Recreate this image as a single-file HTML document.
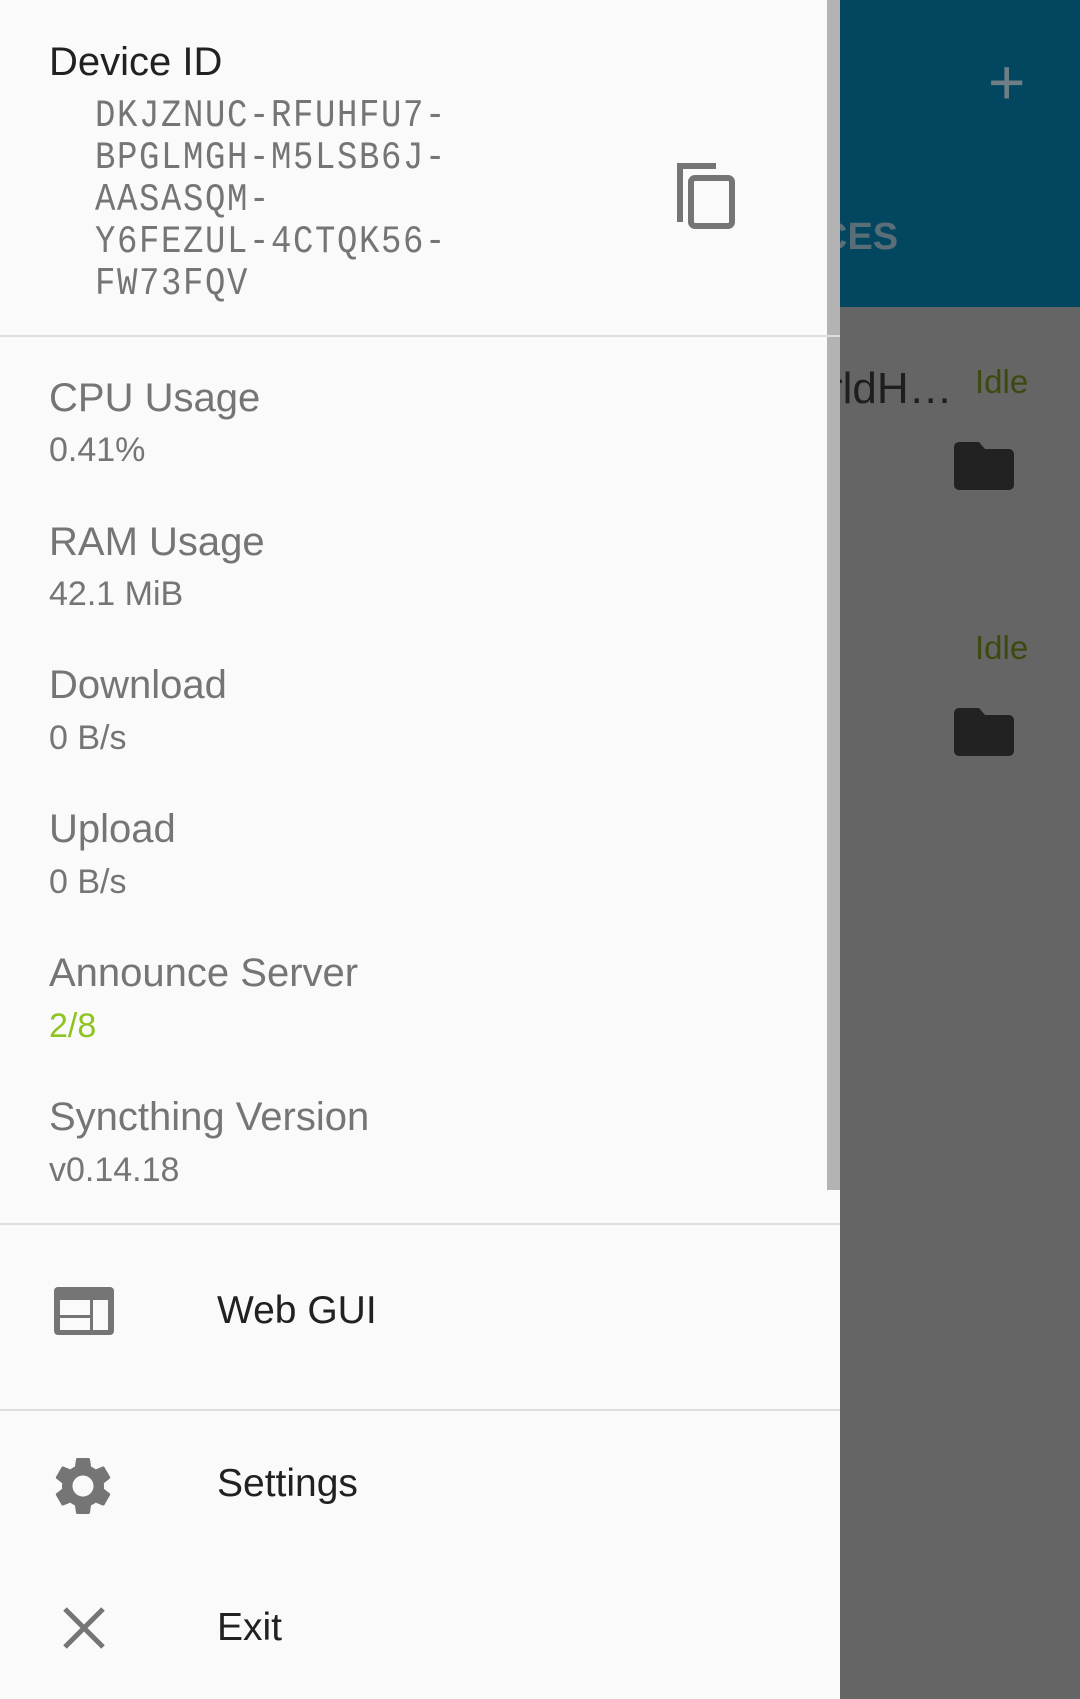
<!DOCTYPE html>
<html><head><meta charset="utf-8"><style>
*{margin:0;padding:0;box-sizing:border-box}
body{width:1080px;height:1699px;overflow:hidden;background:#656565;position:relative;font-family:"Liberation Sans",sans-serif}
.t{position:absolute;white-space:nowrap;line-height:1}
#bar{position:absolute;left:840px;top:0;width:240px;height:307px;background:#02465f}
#drawer{position:absolute;left:0;top:0;width:840px;height:1699px;background:#fafafa}
.sep{position:absolute;left:0;width:840px;height:2px;background:#dedede}
.h{font-size:40px;color:#757575;left:49px}
.v{font-size:34px;color:#757575;left:49px}
.m{font-size:39px;color:#212121;left:217px}
.mono{font-family:"Liberation Mono",monospace;font-size:34px;color:#757575;left:95px;letter-spacing:1.6px;transform:scaleY(1.15);transform-origin:left center}
</style></head><body>
<div id="bar"></div>
<div class="t" style="left:988px;top:50px;font-size:64px;color:#6f7f86;font-weight:300">+</div>
<div class="t" style="left:820px;top:218px;font-size:38px;color:#5a6e78;font-weight:bold">CES</div>
<div class="t" style="left:828px;top:367px;font-size:44px;color:#1e1e1e">rldH…</div>
<div class="t" style="left:975px;top:365px;font-size:33px;color:#3b4a10">Idle</div>
<div class="t" style="left:975px;top:631px;font-size:33px;color:#3b4a10">Idle</div>
<svg style="position:absolute;left:953px;top:440px" width="62" height="52" viewBox="0 0 62 52"><path d="M6 2h20l6 7h24a5 5 0 0 1 5 5v31a5 5 0 0 1-5 5H6a5 5 0 0 1-5-5V7a5 5 0 0 1 5-5z" fill="#222"/></svg>
<svg style="position:absolute;left:953px;top:706px" width="62" height="52" viewBox="0 0 62 52"><path d="M6 2h20l6 7h24a5 5 0 0 1 5 5v31a5 5 0 0 1-5 5H6a5 5 0 0 1-5-5V7a5 5 0 0 1 5-5z" fill="#222"/></svg>
<div id="drawer"></div>
<div style="position:absolute;left:827px;top:0;width:13px;height:1190px;background:#b3b3b3"></div>
<div class="t" style="left:49px;top:42px;font-size:40px;color:#212121">Device ID</div>
<div class="t mono" style="top:100px">DKJZNUC-RFUHFU7-</div>
<div class="t mono" style="top:142px">BPGLMGH-M5LSB6J-</div>
<div class="t mono" style="top:184px">AASASQM-</div>
<div class="t mono" style="top:226px">Y6FEZUL-4CTQK56-</div>
<div class="t mono" style="top:268px">FW73FQV</div>
<svg style="position:absolute;left:676px;top:162px" width="62" height="68" viewBox="0 0 62 68"><path d="M4 60V4h36" fill="none" stroke="#757575" stroke-width="6"/><rect x="15" y="16" width="41" height="48" rx="4" fill="none" stroke="#757575" stroke-width="6"/></svg>
<div class="sep" style="top:335px"></div>
<div class="t h" style="top:378px">CPU Usage</div><div class="t v" style="top:433px">0.41%</div>
<div class="t h" style="top:522px">RAM Usage</div><div class="t v" style="top:577px">42.1 MiB</div>
<div class="t h" style="top:665px">Download</div><div class="t v" style="top:721px">0 B/s</div>
<div class="t h" style="top:809px">Upload</div><div class="t v" style="top:865px">0 B/s</div>
<div class="t h" style="top:953px">Announce Server</div><div class="t v" style="top:1009px;color:#8fc31f">2/8</div>
<div class="t h" style="top:1097px">Syncthing Version</div><div class="t v" style="top:1153px">v0.14.18</div>
<div class="sep" style="top:1223px"></div>
<svg style="position:absolute;left:54px;top:1287px" width="60" height="48" viewBox="0 0 60 48"><rect x="0" y="0" width="60" height="48" rx="4" fill="#757575"/><rect x="6" y="13" width="30" height="15" fill="#fafafa"/><rect x="6" y="31" width="30" height="12" fill="#fafafa"/><rect x="39" y="13" width="15" height="30" fill="#fafafa"/></svg>
<div class="t m" style="top:1291px">Web GUI</div>
<div class="sep" style="top:1409px"></div>
<svg style="position:absolute;left:48px;top:1451px" width="70" height="70" viewBox="0 0 24 24"><path fill="#757575" d="M19.14 12.94c.04-.3.06-.61.06-.94 0-.32-.02-.64-.07-.94l2.03-1.58a.49.49 0 0 0 .12-.61l-1.92-3.32a.488.488 0 0 0-.59-.22l-2.39.96c-.5-.38-1.030-.7-1.62-.94l-.36-2.54a.484.484 0 0 0-.48-.41h-3.84c-.24 0-.43.17-.47.41l-.36 2.54c-.59.24-1.13.57-1.62.94l-2.39-.96c-.22-.08-.47 0-.59.22L2.74 8.870c-.12.21-.08.47.12.61l2.03 1.58c-.05.3-.09.63-.09.94s.02.64.07.94l-2.03 1.58a.49.49 0 0 0-.12.61l1.92 3.32c.12.22.37.29.59.22l2.39-.96c.5.38 1.03.7 1.62.94l.36 2.54c.05.24.24.41.48.41h3.84c.24 0 .44-.17.47-.41l.36-2.54c.59-.24 1.13-.56 1.62-.94l2.39.96c.22.08.47 0 .59-.22l1.92-3.32c.12-.22.07-.47-.12-.61l-2.01-1.58zM12 15.6c-1.98 0-3.6-1.62-3.6-3.6s1.62-3.6 3.6-3.6 3.6 1.62 3.6 3.6-1.62 3.6-3.6 3.6z"/></svg>
<div class="t m" style="top:1464px">Settings</div>
<svg style="position:absolute;left:62px;top:1606px" width="44" height="44" viewBox="0 0 44 44"><path d="M3 3L41 41M41 3L3 41" stroke="#757575" stroke-width="5"/></svg>
<div class="t m" style="top:1608px">Exit</div>
</body></html>
